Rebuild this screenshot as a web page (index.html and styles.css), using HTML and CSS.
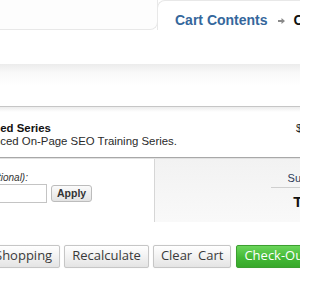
FILE: index.html
```html
<!DOCTYPE html>
<html>
<head>
<meta charset="utf-8">
<link rel="stylesheet" href="styles.css">
</head>
<body>
<div class="page">
  <div class="header">
    <div class="hd-left"></div>
    <div class="hd-tab">
      <a class="crumb-link" href="#">Cart Contents</a>
      <svg class="crumb-arrow" width="7" height="6" viewBox="0 0 7 6"><path d="M0 2h3.5V0L7 3 3.5 6V4H0z" fill="#8a8a8a"/></svg>
      <span class="crumb-current">Checkout</span>
    </div>
  </div>
  <div class="spacer"></div>
  <div class="shade"></div>
  <div class="cart">
    <div class="item-row">
      <div class="item-info">
        <div class="item-title">Bundled Series</div>
        <div class="item-desc">Advanced On-Page SEO Training Series.</div>
      </div>
      <div class="item-price">$197.00</div>
    </div>
    <div class="cart-foot">
      <div class="coupon">
        <div class="coupon-label">Coupon Code <i>(optional):</i></div>
        <div class="coupon-form">
          <input class="coupon-input" type="text">
          <button class="apply-btn">Apply</button>
        </div>
      </div>
      <div class="totals-panel">
        <div class="totals">
          <div class="t-row t-sub"><span class="t-label">Subtotal:</span><span class="t-val">$197.00</span></div>
          <div class="t-row t-total"><span class="t-label">Total:</span><span class="t-val">$197.00</span></div>
        </div>
      </div>
    </div>
  </div>
  <div class="actions">
    <button class="btn">Continue Shopping</button>
    <button class="btn">Recalculate</button>
    <button class="btn">Clear Cart</button>
    <button class="btn btn-go">Check-Out</button>
  </div>
</div>
</body>
</html>
```
FILE: styles.css
```css
html, body {
  margin: 0;
  padding: 0;
  background: #fff;
  overflow: hidden;
}
body {
  width: 300px;
  height: 300px;
  font-family: "Liberation Sans", Arial, sans-serif;
  color: #222;
}
.page {
  margin-left: -120px;
  width: 560px;
}
.header {
  display: flex;
  height: 30px;
}
.hd-left {
  width: 278px;
  height: 30px;
  box-sizing: border-box;
  border-bottom: 1px solid #e8e8e8;
  border-right: 1px solid #e8e8e8;
  border-bottom-right-radius: 8px;
  background: #fdfdfd;
}
.hd-tab {
  flex: 1;
  margin-left: -1px;
  box-sizing: border-box;
  height: 30px;
  border-top: 1px solid #e8e8e8;
  border-left: 1px solid #e8e8e8;
  border-top-left-radius: 8px;
  padding: 9px 0 0 17px;
  font-size: 14px;
  line-height: 16px;
  font-weight: bold;
  white-space: nowrap;
  display: flex;
  align-items: center;
  align-self: flex-start;
}
.crumb-link {
  color: #35679c;
  text-decoration: none;
}
.crumb-arrow {
  margin: 1px 9px 0 10px;
}
.crumb-current {
  color: #111;
}
.spacer {
  height: 34px;
}
.shade {
  height: 42px;
  background: linear-gradient(#ececec, #f8f8f8 8px, #fff 22px);
}
.cart {
  border-top: 1px solid #c6c6c6;
}
.item-row {
  display: flex;
  justify-content: space-between;
  padding: 15px 4px 9px 88px;
  border-bottom: 1px solid #a8a8a8;
  background: linear-gradient(#ececec, #fff 5px);
  font-size: 11.4px;
  line-height: 13px;
}
.item-title {
  font-weight: bold;
  color: #111;
}
.item-desc {
  color: #2a2a2a;
}
.item-price {
  width: 140px;
  font-size: 11px;
}
.cart-foot {
  display: flex;
  height: 64px;
  border-top: 1px solid #e2e2e2;
  box-sizing: border-box;
}
.coupon {
  width: 274px;
  box-sizing: border-box;
  padding: 13px 0 0 39px;
}
.coupon-label {
  font-size: 10px;
  line-height: 12px;
  color: #333;
  font-style: italic;
  white-space: nowrap;
}
.coupon-form {
  display: flex;
  align-items: center;
  gap: 4px;
}
.coupon-input {
  width: 128px;
  height: 19px;
  box-sizing: border-box;
  margin: 0;
  border: 1px solid #c4c4c4;
  background: #fff;
  padding: 0 3px;
}
.apply-btn {
  height: 17px;
  box-sizing: border-box;
  margin: 0;
  padding: 0 5px;
  border: 1px solid #bcbcbc;
  border-radius: 3px;
  background: linear-gradient(#fbfbfb, #e3e3e3);
  font-family: "Liberation Sans", Arial, sans-serif;
  font-size: 10.5px;
  font-weight: bold;
  line-height: 15px;
  color: #333;
}
.totals-panel {
  flex: 1;
  border-left: 1px solid #d6d6d6;
  background: linear-gradient(#f2f2f2, #f9f9f9);
  padding: 12px 0 0 116px;
}
.totals {
  display: flex;
  flex-direction: column;
  width: 150px;
}
.t-row {
  display: flex;
}
.t-label {
  width: 62px;
  text-align: right;
  flex-shrink: 0;
  box-sizing: border-box;
}
.t-val {
  padding-left: 10px;
}
.t-sub {
  font-size: 11px;
  line-height: 14px;
  color: #2c3a58;
  padding-bottom: 2px;
  border-bottom: 1px solid #cfcfcf;
}
.t-sub .t-label {
  padding-right: 2px;
}
.t-total {
  font-size: 15px;
  line-height: 18px;
  font-weight: bold;
  color: #111;
  padding-top: 5px;
}
.actions {
  display: flex;
  gap: 4px;
  margin-top: 23px;
  padding-left: 46px;
}
.btn {
  height: 23px;
  box-sizing: border-box;
  margin: 0;
  padding: 0 7px 2px;
  border: 1px solid #c6c6c6;
  border-radius: 2px;
  background: linear-gradient(#ffffff, #f2f2f2 50%, #e4e4e4);
  box-shadow: 0 0 1px rgba(0,0,0,0.15);
  font-family: "Open Sans", sans-serif;
  font-size: 13px;
  line-height: 19px;
  word-spacing: 2.5px;
  color: #3a3a3a;
  white-space: nowrap;
}
.btn-go {
  margin-left: 1px;
  border-color: #3c9f30;
  background: linear-gradient(#6bd55b, #44b936 55%, #38a82b);
  color: #fff;
}
```
